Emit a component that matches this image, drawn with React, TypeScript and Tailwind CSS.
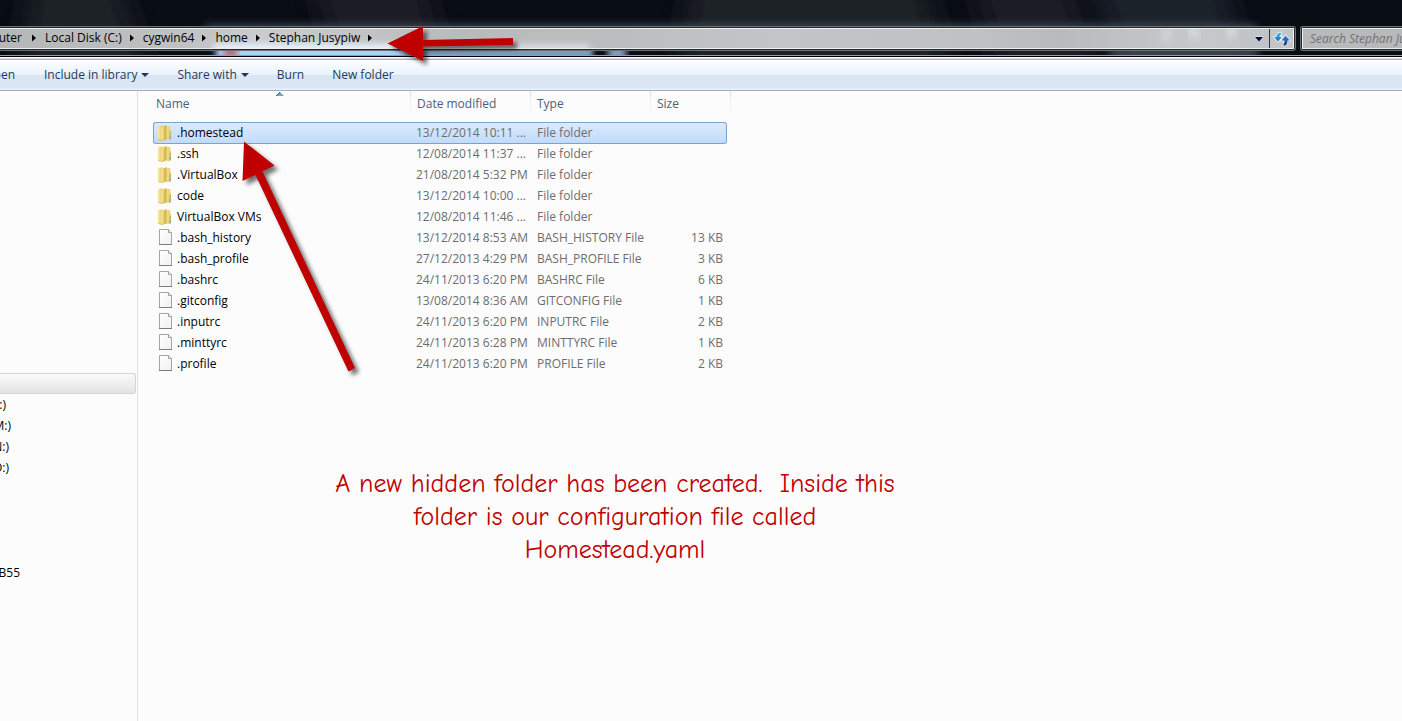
import React from "react";

type Entry = { name: string; date: string; type: string; size?: string; selected?: boolean };

const entries: Entry[] = [
  { name: ".homestead", date: "13/12/2014 10:11 ...", type: "File folder", selected: true },
  { name: ".ssh", date: "12/08/2014 11:37 ...", type: "File folder" },
  { name: ".VirtualBox", date: "21/08/2014 5:32 PM", type: "File folder" },
  { name: "code", date: "13/12/2014 10:00 ...", type: "File folder" },
  { name: "VirtualBox VMs", date: "12/08/2014 11:46 ...", type: "File folder" },
  { name: ".bash_history", date: "13/12/2014 8:53 AM", type: "BASH_HISTORY File", size: "13 KB" },
  { name: ".bash_profile", date: "27/12/2013 4:29 PM", type: "BASH_PROFILE File", size: "3 KB" },
  { name: ".bashrc", date: "24/11/2013 6:20 PM", type: "BASHRC File", size: "6 KB" },
  { name: ".gitconfig", date: "13/08/2014 8:36 AM", type: "GITCONFIG File", size: "1 KB" },
  { name: ".inputrc", date: "24/11/2013 6:20 PM", type: "INPUTRC File", size: "2 KB" },
  { name: ".minttyrc", date: "24/11/2013 6:28 PM", type: "MINTTYRC File", size: "1 KB" },
  { name: ".profile", date: "24/11/2013 6:20 PM", type: "PROFILE File", size: "2 KB" },
];

function FolderIcon() {
  return (
    <svg width="16" height="18" viewBox="0 0 16 18" aria-hidden="true" className="shrink-0">
      <defs>
        <linearGradient id="folderBack" x1="0" x2="1">
          <stop offset="0" stopColor="#f7e9a6" />
          <stop offset="1" stopColor="#e3c868" />
        </linearGradient>
        <linearGradient id="folderFront" x1="0" x2="1">
          <stop offset="0" stopColor="#f3e08c" />
          <stop offset="0.5" stopColor="#e2c25a" />
          <stop offset="1" stopColor="#d3ae40" />
        </linearGradient>
      </defs>
      <path d="M8 2h5.200v3.500l0.900 1v8.500l-1 1H8z" fill="url(#folderBack)" />
      <path d="M1 2L5.500 1.200v15L1 15.500z" fill="url(#folderBack)" />
      <path d="M4.800 3L9.600 1v13.800L4.800 17z" fill="url(#folderFront)" />
      <path d="M5 3.200v13" stroke="#f9efb6" strokeWidth="0.7" />
      <path d="M1 15.400L4.800 16.600L9.600 14.800" fill="none" stroke="#cba846" strokeWidth="0.6" />
      <rect x="12.600" y="8" width="1" height="3" fill="#c2a344" />
      <rect x="12.400" y="11.500" width="1.200" height="3.500" fill="#6ba6ce" />
    </svg>
  );
}

function FileIcon() {
  return (
    <svg width="16" height="18" viewBox="0 0 16 18" aria-hidden="true" className="shrink-0">
      <defs>
        <linearGradient id="paper" x1="0" y1="0" x2="1" y2="1">
          <stop offset="0" stopColor="#ffffff" />
          <stop offset="1" stopColor="#f0f0f0" />
        </linearGradient>
      </defs>
      <path d="M2.500 0.500h9l3 3v12h-12z" fill="url(#paper)" stroke="#a5a5a5" />
      <path d="M2 15.500h13" stroke="#7c7c7c" />
      <path d="M11.500 0.500v3h3" fill="#f4f4f4" stroke="#a0a0a0" />
    </svg>
  );
}

function RefreshIcon() {
  return (
    <svg width="18" height="16" viewBox="0 0 18 16" aria-hidden="true">
      <defs>
        <linearGradient id="refreshDown" x1="0" y1="0" x2="0" y2="1">
          <stop offset="0" stopColor="#35c7ee" />
          <stop offset="1" stopColor="#1f5fb4" />
        </linearGradient>
        <linearGradient id="refreshUp" x1="0" y1="0" x2="0" y2="1">
          <stop offset="0" stopColor="#3f86d8" />
          <stop offset="1" stopColor="#15327c" />
        </linearGradient>
      </defs>
      <path
        d="M8 1.500C5 1.500 3.500 3 3.500 6H1.200L5 10.500 8.800 6H6.500C6.500 4.500 7 3.800 8 3.500z"
        fill="url(#refreshDown)"
        stroke="#f1f6fa"
        strokeWidth="1.600"
        paintOrder="stroke"
      />
      <path
        d="M10.500 14.800C13.500 14.500 14.500 13 14.500 9.500H16.800L12.500 4.500 8.500 9.500H11.500C11.500 11.500 11.200 12.500 10.500 13z"
        fill="url(#refreshUp)"
        stroke="#f1f6fa"
        strokeWidth="1.600"
        paintOrder="stroke"
      />
    </svg>
  );
}

function CrumbArrow() {
  return (
    <svg width="4" height="8" viewBox="0 0 4 8" aria-hidden="true" className="shrink-0">
      <path d="M0 0.500L4 4L0 7.500z" fill="#000" />
    </svg>
  );
}

function DownArrow() {
  return (
    <svg width="8" height="4" viewBox="0 0 8 4" aria-hidden="true">
      <path d="M0 0h8L4 4z" fill="#1e395b" />
    </svg>
  );
}

function GlassBackdrop() {
  return (
    <svg
      className="absolute inset-0 h-full w-full"
      viewBox="0 0 1402 57"
      preserveAspectRatio="none"
      aria-hidden="true"
    >
      <defs>
        <filter id="bands" x="-5%" y="-100%" width="110%" height="300%">
          <feGaussianBlur stdDeviation="14 3" />
        </filter>
        <filter id="soft" x="-10%" y="-100%" width="120%" height="300%">
          <feGaussianBlur stdDeviation="4" />
        </filter>
        <filter id="strip" x="-20%" y="-100%" width="140%" height="300%">
          <feGaussianBlur stdDeviation="3" />
        </filter>
      </defs>
      <rect width="1402" height="57" fill="#090d14" />
      <g filter="url(#bands)">
        <path d="M30 -10H120L150 70H20z" fill="#1f2426" />
        <path d="M315 -10H425L450 70H340z" fill="#1b1f28" />
        <path d="M690 -10H925L950 70H680z" fill="#1d2225" />
        <path d="M975 -10H1070L1100 70H1000z" fill="#1a1e27" />
        <path d="M1095 -10H1225L1250 70H1125z" fill="#1d2129" />
      </g>
      <rect x="205" y="24" width="1052" height="24" fill="#43505c" opacity="0.7" filter="url(#soft)" />
      <rect x="216" y="44" width="375" height="26" fill="#a9d0f6" filter="url(#strip)" />
      <rect x="405" y="44" width="186" height="26" fill="#6f8fb0" opacity="0.8" filter="url(#strip)" />
      <rect x="608" y="44" width="18" height="24" fill="#7d9cb9" filter="url(#strip)" />
      <rect x="1110" y="48" width="148" height="12" fill="#43505c" opacity="0.8" filter="url(#soft)" />
      <rect x="224" y="47" width="13" height="12" fill="#c05a68" opacity="0.9" filter="url(#strip)" />
    </svg>
  );
}

function Crumb({ children }: { children: React.ReactNode }) {
  return (
    <li className="flex items-center gap-[8px]">
      <a href="#" className="whitespace-nowrap">
        {children}
      </a>
      <CrumbArrow />
    </li>
  );
}

function AddressBar() {
  return (
    <header className="relative h-[57px] overflow-hidden border-b border-black pt-[26px]">
      <GlassBackdrop />
      <div className="relative flex gap-[4px]">
        <div className="min-w-0 flex-1 rounded-r-[3px] border-y border-r border-[#6b7074] bg-[#25292c] py-px pr-px">
          <div className="relative flex h-[21px] border-y border-r border-[#eef0f0] bg-[linear-gradient(90deg,#b4b6b7_0%,#bfc1c2_14%,#c9ccce_20%,#b9babb_36%,#bcbdbe_48%,#c2c6c9_60%,#bfc1c3_75%,#b9babb_82%,#c5c9cb_92%,#bfc2c4_100%)]">
            <svg
              className="absolute inset-0 h-full w-full"
              viewBox="0 0 1294 19"
              preserveAspectRatio="none"
              aria-hidden="true"
            >
              <rect x="214" y="15" width="190" height="14" fill="#e8f3ff" filter="url(#strip)" />
              <rect x="390" y="15" width="200" height="14" fill="#dbe5ee" opacity="0.8" filter="url(#strip)" />
              <circle cx="1167" cy="6" r="5" fill="#d8dde0" filter="url(#soft)" />
              <circle cx="1195" cy="3" r="5" fill="#dfe4e7" filter="url(#soft)" />
              <circle cx="1232" cy="3" r="5" fill="#dfe4e7" filter="url(#soft)" />
            </svg>
            <nav aria-label="Address" className="relative flex min-w-0 flex-1 items-center pb-px text-black">
              <ol className="flex items-center gap-[9px]">
                <li className="flex items-center gap-[10px]">
                  <a href="#" className="flex w-[22px] justify-end overflow-hidden">
                    Computer
                  </a>
                  <CrumbArrow />
                </li>
                <Crumb>Local Disk (C:)</Crumb>
                <Crumb>cygwin64</Crumb>
                <Crumb>home</Crumb>
                <Crumb>Stephan Jusypiw</Crumb>
              </ol>
            </nav>
            <button aria-label="Previous locations" className="relative flex w-[20px] items-center justify-center">
              <svg width="10" height="6" viewBox="0 0 10 6" aria-hidden="true">
                <path d="M1 1h8L5 5.500z" fill="#00004f" stroke="#eef2f5" strokeWidth="1" paintOrder="stroke" />
              </svg>
            </button>
            <button
              aria-label="Refresh"
              className="relative flex w-[24px] items-center justify-center border-l border-[#33373a] bg-[#c3c5c6]"
            >
              <RefreshIcon />
            </button>
          </div>
        </div>
        <div className="w-[102px] rounded-l-[3px] border-y border-l border-[#6b7074] bg-[#25292c] py-px pl-px">
          <input
            aria-label="Search"
            placeholder="Search Stephan Jusypiw"
            className="block h-[21px] w-full border-y border-l border-[#eef0f0] bg-[#b7b9ba] pb-px pl-[7px] text-[12px] italic text-black outline-none placeholder:text-[#707376]"
          />
        </div>
      </div>
      <div className="relative mt-[4px] h-px bg-[#9a9da0]" />
    </header>
  );
}

function Toolbar() {
  return (
    <div className="border-t border-white">
      <div className="h-px bg-[#dcdcea]" />
      <div className="flex h-[32px] items-center border-y border-t-[#b0abc8] border-b-[#a0afc9] bg-[linear-gradient(180deg,#fdfeff_0%,#e8f3fb_50%,#dae6f4_50%,#dae6f4_92%,#e6f0fa_96%)] text-[#1e395b]">
        <button className="flex w-[15px] justify-end overflow-hidden">Open</button>
        <button className="ml-[29px] flex items-center gap-[4px] whitespace-nowrap">
          Include in library <DownArrow />
        </button>
        <button className="ml-[28px] flex items-center gap-[4px] whitespace-nowrap">
          Share with <DownArrow />
        </button>
        <button className="ml-[28px]">Burn</button>
        <button className="ml-[28px] whitespace-nowrap">New folder</button>
      </div>
    </div>
  );
}

function DriveItem({ children }: { children: React.ReactNode }) {
  return (
    <li className="h-[21px]">
      <a href="#" className="flex w-max justify-end leading-[21px]">
        {children}
      </a>
    </li>
  );
}

function Sidebar() {
  return (
    <aside className="w-[138px] shrink-0 overflow-hidden border-r border-[#d6e2f0] pt-[282px] text-black">
      <div className="mr-px h-[21px] rounded-r-[3px] border-y border-r border-[#d4d4d4] bg-[linear-gradient(180deg,#fafafa,#e3e3e3)]" />
      <ul>
        <DriveItem>
          <span className="flex w-[6px] justify-end overflow-hidden">(L:)</span>
        </DriveItem>
        <DriveItem>
          <span className="flex w-[11px] justify-end overflow-hidden">(M:)</span>
        </DriveItem>
        <DriveItem>
          <span className="flex w-[9px] justify-end overflow-hidden">(N:)</span>
        </DriveItem>
        <DriveItem>
          <span className="flex w-[9px] justify-end overflow-hidden">(O:)</span>
        </DriveItem>
      </ul>
      <ul className="mt-[84px]">
        <DriveItem>
          <span className="flex w-[20px] justify-end overflow-hidden">B55</span>
        </DriveItem>
      </ul>
    </aside>
  );
}

function HeadCell({ children, sorted }: { children: React.ReactNode; sorted?: boolean }) {
  return (
    <th scope="col" aria-sort={sorted ? "ascending" : undefined} className="relative p-0 text-left font-normal">
      <div className="flex h-[25px] items-center justify-between">
        <span className={sorted ? "pl-[3px]" : "pl-[6px]"}>{children}</span>
        <span className="h-full w-px bg-[linear-gradient(180deg,#d5e4f4,#fcfcfc)]" />
      </div>
      {sorted && (
        <svg className="absolute left-[123px] top-px" width="8" height="4" viewBox="0 0 8 4" aria-hidden="true">
          <path d="M4 0L8 4H0z" fill="#6fa6c4" />
          <path d="M4 0L0 4" stroke="#39647c" />
        </svg>
      )}
    </th>
  );
}

function Row({ entry }: { entry: Entry }) {
  const fill = entry.selected
    ? "border-y border-[#7da2ce] bg-[linear-gradient(180deg,#dceafc,#c1dbfc)]"
    : "border-y border-transparent";
  const left = entry.selected ? "rounded-l-[3px] border-l" : "border-l";
  const right = entry.selected ? "rounded-r-[3px] border-r" : "border-r";
  return (
    <tr className="text-[#6d6d6d]">
      <td className="p-0">
        <div className={`-mb-px flex h-[22px] items-center gap-[4px] pl-[3px] text-black ${fill} ${left}`}>
          {entry.size ? <FileIcon /> : <FolderIcon />}
          <span>{entry.name}</span>
        </div>
      </td>
      <td className="p-0">
        <div className={`-mb-px flex h-[22px] items-center whitespace-nowrap pl-[5px] ${fill}`}>{entry.date}</div>
      </td>
      <td className="p-0">
        <div className={`-mb-px flex h-[22px] items-center whitespace-nowrap pl-[6px] ${fill}`}>{entry.type}</div>
      </td>
      <td className="p-0">
        <div className={`-mb-px mr-[4px] flex h-[22px] items-center justify-end pr-[3px] ${fill} ${right}`}>
          {entry.size}
        </div>
      </td>
    </tr>
  );
}

function FileList() {
  return (
    <table className="ml-[15px] w-[578px] table-fixed border-collapse">
      <colgroup>
        <col className="w-[258px]" />
        <col className="w-[120px]" />
        <col className="w-[120px]" />
        <col className="w-[80px]" />
      </colgroup>
      <thead className="text-[#4c607a]">
        <tr className="h-[31px] align-top">
          <HeadCell sorted>Name</HeadCell>
          <HeadCell>Date modified</HeadCell>
          <HeadCell>Type</HeadCell>
          <HeadCell>Size</HeadCell>
        </tr>
      </thead>
      <tbody>
        {entries.map((entry) => (
          <Row key={entry.name} entry={entry} />
        ))}
      </tbody>
    </table>
  );
}

function Arrows() {
  return (
    <svg
      className="pointer-events-none absolute left-0 top-0"
      width="560"
      height="400"
      viewBox="0 0 560 400"
      aria-hidden="true"
    >
      <g fill="#c00000" className="drop-shadow-[4px_4px_2px_rgba(0,0,0,0.55)]">
        <path d="M387.500 43.500L423 26V40L513 38V45L423 46.500V61z" />
        <path d="M244 141.500L274.500 165.500L262.500 171.500L355 368L348.500 371.500L255.500 175L242.500 181z" />
      </g>
    </svg>
  );
}

export default function App() {
  return (
    <div className="relative flex min-h-screen flex-col overflow-hidden bg-[#fcfcfc] font-['Segoe_UI','Open_Sans',sans-serif] text-[12px] leading-[16px]">
      <AddressBar />
      <Toolbar />
      <div className="flex flex-1">
        <Sidebar />
        <main className="relative min-w-0 flex-1">
          <FileList />
          <p className="absolute left-[177px] top-[377px] w-[600px] whitespace-pre-line text-center font-['Comic_Sans_MS','Comic_Neue','Open_Sans',sans-serif] text-[26px] leading-[33px] text-[#c00000]">
            {"A new hidden folder has been created.\u00a0 Inside this\nfolder is our configuration file called\nHomestead.yaml"}
          </p>
        </main>
      </div>
      <Arrows />
    </div>
  );
}
